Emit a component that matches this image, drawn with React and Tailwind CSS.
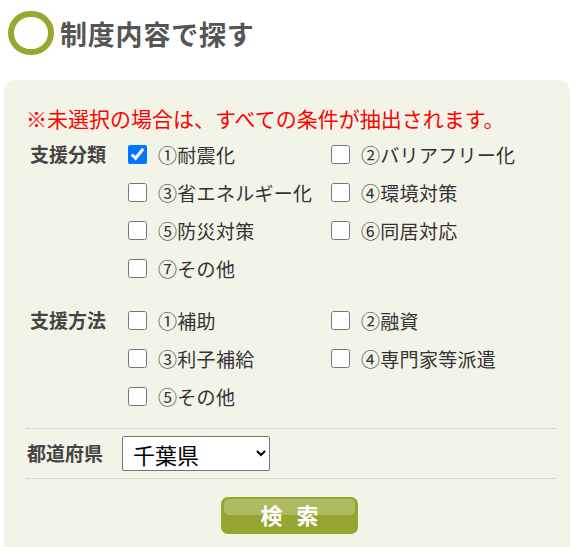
const font = { fontFamily: '"Noto Sans CJK JP", "Noto Sans", sans-serif' };

const supportTypes = [
  { label: "①耐震化", checked: true },
  { label: "②バリアフリー化" },
  { label: "③省エネルギー化" },
  { label: "④環境対策" },
  { label: "⑤防災対策" },
  { label: "⑥同居対応" },
  { label: "⑦その他" },
];

const supportMethods = [
  { label: "①補助" },
  { label: "②融資" },
  { label: "③利子補給" },
  { label: "④専門家等派遣" },
  { label: "⑤その他" },
];

function CheckList({ items }) {
  return (
    <div className="grid grid-cols-[203px_203px]">
      {items.map((item) => (
        <label key={item.label} className="flex items-center h-[38px] whitespace-nowrap">
          <input
            type="checkbox"
            defaultChecked={item.checked}
            className="w-[19px] h-[19px] m-0 shrink-0"
          />
          <span className="ml-[11px] text-[19px] tracking-[0.3px] text-[#333] leading-none">{item.label}</span>
        </label>
      ))}
    </div>
  );
}

function Row({ title, children }) {
  return (
    <div className="flex">
      <div className="w-[102px] shrink-0 h-[38px] flex items-center pl-[4px] text-[19px] font-bold text-[#444]">
        {title}
      </div>
      {children}
    </div>
  );
}

export default function App() {
  return (
    <div className="bg-white w-[571px] h-[547px] overflow-hidden" style={font}>
      <div className="flex items-center h-[80px] pl-[8px] pb-[14px]">
        <div className="w-[46px] h-[44px] rounded-full border-[6px] border-[#98a82e]"></div>
        <h2 className="ml-[6px] text-[27px] tracking-[0.8px] font-bold text-[#555] leading-none">制度内容で探す</h2>
      </div>

      <div className="ml-[4px] mr-[1px] bg-[#f3f4e8] rounded-t-[12px] pt-[23px] pl-[22px] pr-[15px] pb-[20px]">
        <p className="text-[21px] leading-[30px] text-[#ff0000] whitespace-nowrap">
          ※未選択の場合は、すべての条件が抽出されます。
        </p>

        <div className="mt-[2px]">
          <Row title="支援分類">
            <CheckList items={supportTypes} />
          </Row>
          <div className="mt-[14px]">
            <Row title="支援方法">
              <CheckList items={supportMethods} />
            </Row>
          </div>
        </div>

        <div className="mt-[13px] border-t border-b border-dotted border-[#bdbdb2] h-[51px] flex items-center">
          <div className="w-[96px] pl-[1px] text-[19px] font-bold text-[#444]">都道府県</div>
          <select
            defaultValue="chiba"
            className="w-[148px] h-[35px] bg-white border border-[#767676] rounded-[2px] text-[22px] text-black pl-[6px] leading-none"
          >
            <option value="tokyo">東京都</option>
            <option value="chiba">千葉県</option>
            <option value="saitama">埼玉県</option>
          </select>
        </div>

        <div className="flex justify-center mt-[18px] pl-[2px] pr-[4px]">
          <button className="relative w-[137px] h-[37px] rounded-[7px] overflow-hidden bg-[#97a430]">
            <span className="absolute left-[3px] right-[3px] top-[2px] h-[16px] rounded-[5px] bg-[#aebb62]"></span>
            <span className="relative text-[22px] font-bold text-white tracking-[14px] pl-[14px] leading-none">
              検索
            </span>
          </button>
        </div>
      </div>
    </div>
  );
}
